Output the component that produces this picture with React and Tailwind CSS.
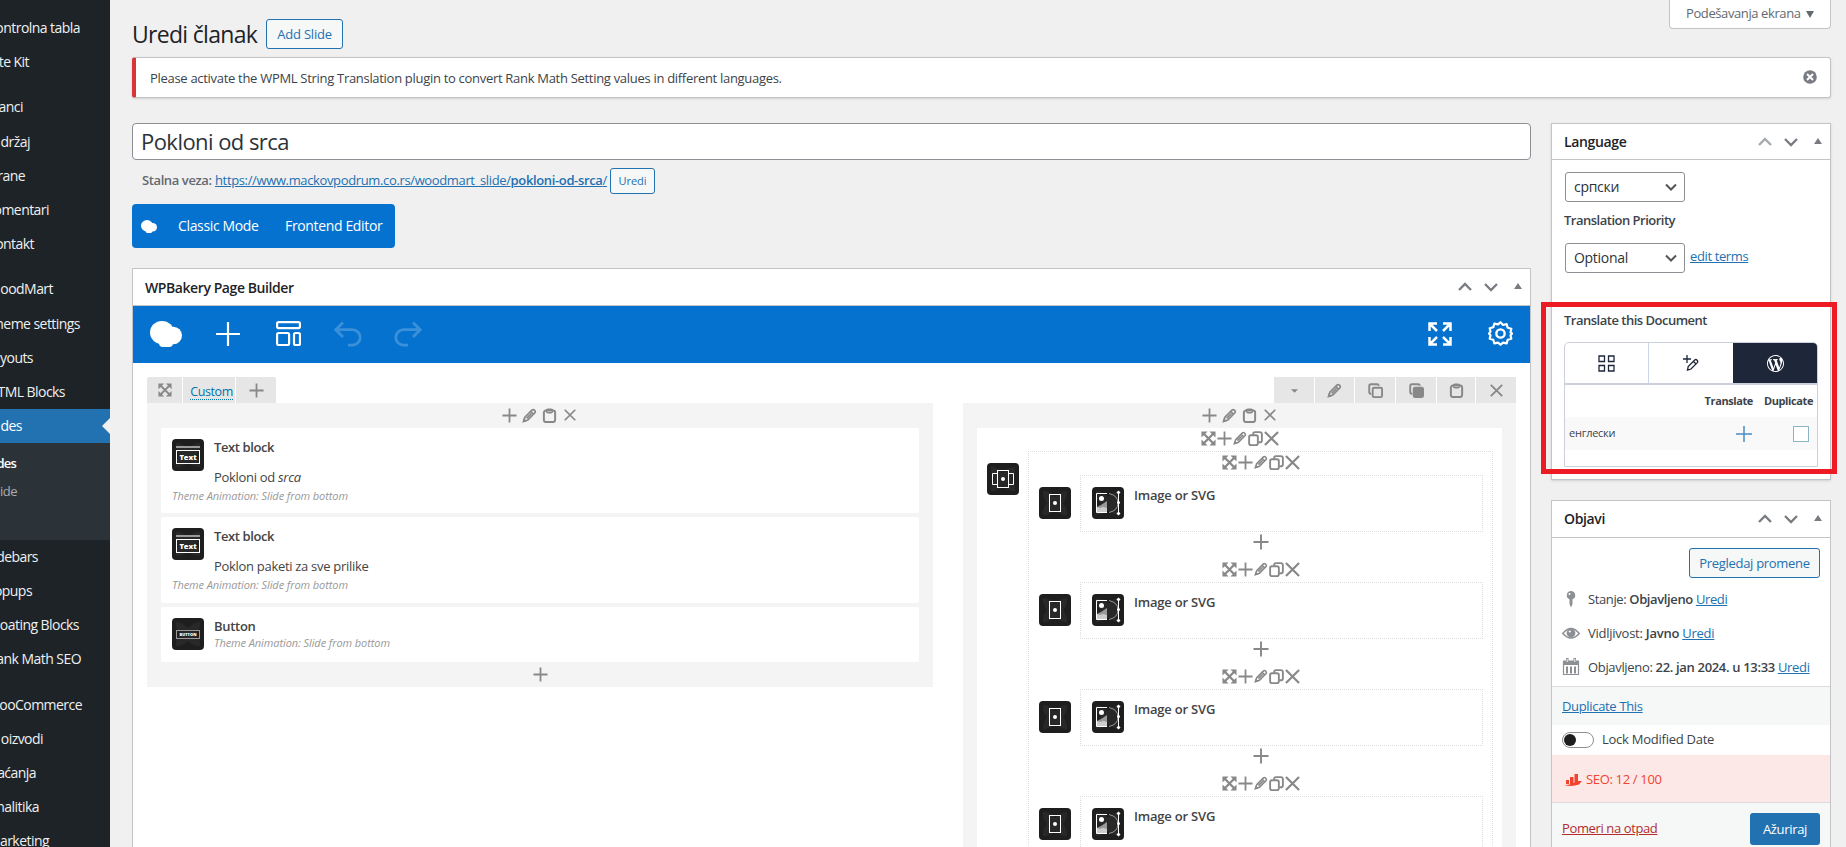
import React from 'react';

const menuItems = [
  { label: 'ontrolna tabla', width: 'w-[80px]', space: 'mt-[11px]' },
  { label: 'te Kit', width: 'w-[29px]' },
  { label: 'anci', width: 'w-[23px]', space: 'mt-[11px]' },
  { label: 'držaj', width: 'w-[30px]', space: 'mt-px' },
  { label: 'rane', width: 'w-[25px]' },
  { label: 'omentari', width: 'w-[49px]' },
  { label: 'ontakt', width: 'w-[34px]' },
  { label: 'oodMart', width: 'w-[53px]', space: 'mt-[11px]' },
  { label: 'heme settings', width: 'w-[80px]', space: 'mt-px' },
  { label: 'ayouts', width: 'w-[33px]' },
  { label: 'TML Blocks', width: 'w-[65px]' },
  { label: 'des', width: 'w-[22px]', active: true },
  { label: 'debars', width: 'w-[38px]' },
  { label: 'opups', width: 'w-[32px]' },
  { label: 'oating Blocks', width: 'w-[79px]' },
  { label: 'ank Math SEO', width: 'w-[81px]' },
  { label: 'ooCommerce', width: 'w-[82px]', space: 'mt-3' },
  { label: 'oizvodi', width: 'w-[43px]' },
  { label: 'aćanja', width: 'w-[36px]' },
  { label: 'nalitika', width: 'w-[39px]' },
  { label: 'arketing', width: 'w-[49px]' },
];

const Svg = ({ className, children, box = 16 }) => (
  <svg viewBox={`0 0 ${box} ${box}`} className={className} fill="none" stroke="currentColor" strokeWidth="1.9">
    {children}
  </svg>
);

const MoveIcon = ({ className = 'size-[15px]' }) => (
  <Svg className={className}>
    <path d="M3 3l10 10M13 3L3 13" strokeWidth="2.4" />
    <path d="M.5.500h6.500L.500 7zM15.500.500v6.500L9 .500zM.500 15.500V9L7 15.500zM15.500 15.500H9l6.500-6.500z" fill="currentColor" stroke="none" />
  </Svg>
);

const PlusIcon = ({ className = 'size-4' }) => (
  <Svg className={className}>
    <path d="M8 .5v15M.5 8h15" />
  </Svg>
);

const PencilIcon = ({ className = 'size-[15px]' }) => (
  <Svg className={className}>
    <path d="M1.800 14.200l1.300-4.400 7.700-7.700q1.300-1 2.600.4t.4 2.600L6.200 12.800z M9.300 3.700l3.100 3.100M5 11l5-5" strokeWidth="1.800" />
    <path d="M.500 15.500l1.200-4.500 3.300 3.300z" fill="currentColor" stroke="none" />
  </Svg>
);

const ClipboardIcon = ({ className = 'size-[15px]' }) => (
  <Svg className={className}>
    <rect x="2" y="2.700" width="12" height="12.300" rx="2.200" strokeWidth="2.100" />
    <rect x="4.800" y="1.300" width="6.400" height="3.700" rx="1.500" strokeWidth="1.600" />
  </Svg>
);

const CopyIcon = ({ className = 'size-[15px]', filled }) => (
  <Svg className={className}>
    <rect x="5" y="5" width="10" height="10" rx="1.500" strokeWidth="2" fill={filled ? 'currentColor' : 'none'} />
    <path d="M3.500 11.500Q1.300 11.500 1.300 9.500V3.300Q1.300 1.300 3.300 1.300H9.500Q11.500 1.300 11.500 3" strokeWidth="2" />
  </Svg>
);

const CloneIcon = ({ className = 'size-[15px]' }) => (
  <Svg className={className}>
    <rect x="1.200" y="4.500" width="9.300" height="10.500" rx="2" strokeWidth="2" />
    <path d="M5.500 4V3Q5.500 1.200 7.500 1.200H12.500Q14.800 1.200 14.800 3.500V10Q14.800 12 12.500 12H11" strokeWidth="2" />
  </Svg>
);

const CloseIcon = ({ className = 'size-[15px]' }) => (
  <Svg className={className}>
    <path d="M1 1l14 14M15 1L1 15" strokeWidth="2.300" />
  </Svg>
);

const BakeryLogo = ({ className }) => (
  <svg viewBox="0 0 32 26" className={className} fill="currentColor">
    <ellipse cx="12" cy="11.500" rx="12" ry="11.500" />
    <circle cx="23.300" cy="14.500" r="8.700" />
    <rect x="9" y="16" width="14" height="10" rx="4" />
  </svg>
);

const Chevron = ({ className = '', down }) => (
  <Svg className={`size-[14px] ${className}`} box={14}>
    <path d={down ? 'M1 4l6 6 6-6' : 'M1 10l6-6 6 6'} strokeWidth="2.300" />
  </Svg>
);

const Arrows = ({ dim }) => (
  <div className="flex items-center text-[#787c82]">
    <Chevron className={dim ? 'text-[#a7aaad]' : ''} />
    <Chevron down className="ml-3" />
    <svg viewBox="0 0 8 6" className="mb-[2px] ml-4 h-[6px] w-[8px]">
      <path d="M4 0l4 6H0z" fill="currentColor" />
    </svg>
  </div>
);

const Tile = ({ children }) => (
  <svg viewBox="0 0 32 32" className="size-8 shrink-0">
    <rect width="32" height="32" rx="4" fill="#1e1e1e" />
    <path d="M4 4q6-1 12 6 6-7 12-6 1 6-4 12 5 6 4 12-6 1-12-5-6 6-12 5-1-6 4-12-5-6-4-12z" fill="#282828" />
    {children}
  </svg>
);

const TextTile = () => (
  <Tile>
    <rect x="4" y="7" width="24" height="2" fill="#999" />
    <rect x="4.500" y="11.500" width="23" height="13" fill="none" stroke="#fff" />
    <text x="16" y="21" textAnchor="middle" fill="#fff" fontSize="7.500" fontWeight="800" fontFamily="Open Sans, sans-serif">Text</text>
  </Tile>
);

const ButtonTile = () => (
  <Tile>
    <rect x="4.500" y="12.500" width="23" height="8" fill="none" stroke="#999" />
    <text x="16" y="18" textAnchor="middle" fill="#fff" fontSize="4" fontWeight="800" fontFamily="Open Sans, sans-serif">BUTTON</text>
  </Tile>
);

const CarouselTile = () => (
  <Tile>
    <path d="M10.500 10.500h-5v11h5M21.500 10.500h5v11h-5" fill="none" stroke="#fff" />
    <rect x="10.500" y="7.500" width="11" height="17" fill="none" stroke="#fff" />
    <circle cx="16" cy="16" r="2" fill="#fff" />
  </Tile>
);

const SlideTile = () => (
  <Tile>
    <rect x="10.500" y="7.500" width="11" height="17" fill="none" stroke="#fff" />
    <circle cx="16" cy="16" r="2" fill="#fff" />
  </Tile>
);

const ImageTile = () => (
  <Tile>
    <path d="M15 6.500H4.500V25.500H15" fill="none" stroke="#fff" />
    <path d="M5 20l4-2 6-4v11H5z" fill="#999" />
    <path d="M5 20l3 1 3-1 4 1v4H5z" fill="#ccc" />
    <circle cx="9.500" cy="11.500" r="2.500" fill="#fff" />
    <path d="M17 6.500q9 2 9 9.500t-9 9.500" fill="none" stroke="#999" />
    <path d="M26.500 5v22" stroke="#fff" />
    <path d="M26.500 3.500l2 2-2 2-2-2zM26.500 24.500l2 2-2 2-2-2z" fill="#fff" />
    <circle cx="26.500" cy="15.500" r="1.500" fill="#fff" />
  </Tile>
);

const NestedControls = ({ className }) => (
  <div className={`flex items-center justify-center gap-px pb-[3px] text-[#888] ${className}`}>
    <MoveIcon />
    <PlusIcon className="size-[15px]" />
    <PencilIcon className="size-[14px]" />
    <CloneIcon />
    <CloseIcon />
  </div>
);

const ColumnControls = () => (
  <div className="flex h-[25px] items-center justify-center gap-[5px] pb-px text-[#888]">
    <PlusIcon className="size-[15px]" />
    <PencilIcon />
    <ClipboardIcon />
    <CloseIcon className="mx-[2px] size-3" />
  </div>
);

const ImageSlide = () => (
  <div className="h-[107px]">
    <NestedControls className="h-[23px]" />
    <div className="flex pl-[10px]">
      <div className="pt-3">
        <SlideTile />
      </div>
      <div className="ml-[9px] flex h-[57px] w-[403px] border border-dotted border-[#ddd] pt-[11px] pl-[11px]">
        <ImageTile />
        <span className="ml-[10px] text-[13px] leading-4 font-semibold tracking-[-0.2px] text-[#444]">Image or SVG</span>
      </div>
    </div>
    <div className="flex justify-center pt-[2px] text-[#888]">
      <PlusIcon />
    </div>
  </div>
);

const Sidebar = () => (
  <nav className="flex h-[847px] w-[110px] shrink-0 flex-col overflow-hidden bg-[#1d2327]">
    {menuItems.map((item) => (
      <React.Fragment key={item.label}>
        <div className={`relative flex h-[34px] shrink-0 items-center ${item.space || ''} ${item.active ? 'bg-[#2271b1] text-white' : 'text-[#f0f0f1]'}`}>
          <div className={`flex justify-end text-sm tracking-[-0.55px] whitespace-nowrap ${item.width}`}>{item.label}</div>
          {item.active && (
            <svg viewBox="0 0 8 16" className="absolute right-0 h-4 w-2">
              <path d="M8 0v16L0 8z" fill="#f0f0f1" />
            </svg>
          )}
        </div>
        {item.active && (
          <div className="h-[97px] shrink-0 bg-[#2c3338] pt-[7px] text-[13px] tracking-[-0.8px]">
            <div className="flex h-7 w-4 items-center justify-end font-semibold text-white">des</div>
            <div className="flex h-7 w-[17px] items-center justify-end tracking-[-0.5px] text-[#a9adb1]">ide</div>
          </div>
        )}
      </React.Fragment>
    ))}
  </nav>
);

const PageHeading = () => (
  <div className="flex h-[57px]">
    <h1 className="mt-[17px] w-[134px] text-[23px] leading-[34px] tracking-[-0.7px] whitespace-nowrap text-[#1d2327]">Uredi članak</h1>
    <button className="mt-[19px] h-[30px] w-[77px] rounded-[3px] border border-[#2271b1] bg-[#f6f7f7] pt-px text-[13px] tracking-[-0.2px] text-[#2271b1]">Add Slide</button>
    <div className="ml-auto flex h-[29px] w-[162px] items-center rounded-b border border-t-0 border-[#c3c4c7] bg-white pl-4 text-[13px] tracking-[-0.4px] text-[#646970]">
      <span className="w-[113px] pb-px whitespace-nowrap">Podešavanja ekrana</span>
      <svg viewBox="0 0 8 7" className="ml-[7px] h-[7px] w-[8px]">
        <path d="M0 0h8L4 7z" fill="#646970" />
      </svg>
    </div>
  </div>
);

const Notice = () => (
  <div className="flex h-[41px] items-center rounded-[3px] border border-l-4 border-[#c3c4c7] border-l-[#d63638] bg-white pr-[13px] pl-[14px] shadow-sm">
    <p className="pt-[2px] text-[13px] tracking-[-0.3px]">Please activate the WPML String Translation plugin to convert Rank Math Setting values in different languages.</p>
    <svg viewBox="0 0 14 14" className="mb-[2px] ml-auto size-[14px]">
      <circle cx="7" cy="7" r="6.800" fill="#787c82" />
      <path d="M4 4l6 6M10 4l-6 6" stroke="#fff" strokeWidth="2" />
    </svg>
  </div>
);

const rowTools = [
  { width: 'w-10', icon: <svg viewBox="0 0 8 4" className="mt-px h-1 w-[7px]"><path d="M0 0h8L4 4z" fill="currentColor" /></svg> },
  { width: 'w-[39px]', icon: <PencilIcon /> },
  { width: 'w-10', icon: <CopyIcon /> },
  { width: 'w-10', icon: <CopyIcon filled /> },
  { width: 'w-[38px]', icon: <ClipboardIcon /> },
  { width: 'w-10', icon: <CloseIcon className="size-[13px]" /> },
];

const BakeryToolbar = () => (
  <div className="flex h-[57px] items-center bg-[#0572cf] pr-[17px] pb-[2px] pl-[17px] text-white">
    <BakeryLogo className="h-[26px] w-8" />
    <Svg className="ml-[34px] size-6" box={24}>
      <path d="M12 0v24M0 12h24" strokeWidth="2.200" />
    </Svg>
    <Svg className="ml-9 size-[25px]" box={25}>
      <rect x="1.100" y="1.100" width="22.800" height="6" rx="1.500" strokeWidth="2.200" />
      <rect x="1.100" y="12" width="12" height="12" rx="1.500" strokeWidth="2.200" />
      <rect x="18" y="12" width="6" height="12" rx="1.500" strokeWidth="2.200" />
    </Svg>
    <Svg className="ml-[33px] size-7 text-[#3b91d9]" box={28}>
      <path d="M9 2.500L1.800 9.700 9 16.900M2 9.700H18.500a7.700 7.700 0 0 1 0 15.400H14" strokeWidth="2.800" />
    </Svg>
    <Svg className="ml-8 size-7 text-[#3b91d9]" box={28}>
      <path d="M19 2.500l7.200 7.200-7.200 7.200M26 9.700H9.500a7.700 7.700 0 0 0 0 15.400H14" strokeWidth="2.800" />
    </Svg>
    <Svg className="ml-auto size-6" box={24}>
      <path d="M1.500 9V1.500H9M2 2l7 7M15 1.500h7.500V9M22 2l-7 7M1.500 15v7.500H9M2 22l7-7M15 22.500h7.500V15M22 22l-7-7" strokeWidth="2.500" />
    </Svg>
    <Svg className="ml-9 size-[25px]" box={24}>
      <path d="M12 1.200l2.400 2.600 3.500-.8 1 3.500 3.500 1-.8 3.500L23 12l-1.400 1.800.8 3.200-3.500 1-1 3.500-3.500-.8L12 22.800l-2.400-2.100-3.500.8-1-3.500-3.500-1 .8-3.200L1 12l1.400-1.800-.8-3.200 3.500-1 1-3.500 3.500.8z" strokeWidth="2.100" strokeLinejoin="round" />
      <circle cx="12" cy="12" r="4" strokeWidth="2.300" />
    </Svg>
  </div>
);

const animation = 'Theme Animation: Slide from bottom';

const TextBlock = ({ className, children }) => (
  <div className={`rounded-[2px] bg-white pt-[11px] pl-[11px] text-[#444] ${className}`}>
    <div className="flex">
      <TextTile />
      <div className="ml-[10px] text-[13px]">
        <div className="leading-4 font-semibold tracking-[-0.4px]">Text block</div>
        <div className="mt-[14px] leading-4 tracking-[-0.3px]">{children}</div>
      </div>
    </div>
    <div className="mt-[3px] text-[11px] leading-[15px] tracking-[-0.08px] text-[#999] italic">{animation}</div>
  </div>
);

const PageBuilder = () => (
  <section className="mt-5 h-[579px] border border-b-0 border-[#c3c4c7] bg-white">
    <div className="flex h-[37px] items-center justify-between border-b border-[#c3c4c7] pr-2 pl-3">
      <h2 className="pt-px text-sm font-semibold tracking-[-0.42px] text-[#1d2327]">WPBakery Page Builder</h2>
      <Arrows />
    </div>
    <BakeryToolbar />
    <div className="px-[14px] pt-[14px]">
      <div className="flex h-[26px] justify-between text-[#888]">
        <div className="flex gap-px">
          <div className="flex w-[35px] items-center justify-center rounded-tl-[2px] bg-[#e6e6e6]">
            <MoveIcon className="size-[14px]" />
          </div>
          <div className="flex w-[52px] items-center justify-center bg-[#e6e6e6] pt-1 pl-[5px]">
            <span className="border-b border-dotted border-[#0073aa] text-[12.5px] leading-[14px] tracking-[-0.4px] text-[#0073aa]">Custom</span>
          </div>
          <div className="flex w-10 items-center justify-center rounded-tr-[2px] bg-[#e6e6e6]">
            <PlusIcon className="size-[15px]" />
          </div>
        </div>
        <div className="flex gap-px">
          {rowTools.map((tool, i) => (
            <div key={i} className={`flex items-center justify-center bg-[#e6e6e6] ${tool.width}`}>
              {tool.icon}
            </div>
          ))}
        </div>
      </div>
      <div className="flex justify-between">
        <div className="flex h-[284px] w-[786px] flex-col bg-[#f4f4f4] px-[14px]">
          <ColumnControls />
          <TextBlock className="h-[85px]">
            Pokloni od <em>srca</em>
          </TextBlock>
          <TextBlock className="mt-1 h-[86px]">Poklon paketi za sve prilike</TextBlock>
          <div className="mt-1 flex h-[55px] rounded-[2px] bg-white pt-[11px] pl-[11px]">
            <ButtonTile />
            <div className="ml-[10px] text-[#444]">
              <div className="text-[13px] leading-4 font-semibold tracking-[-0.3px]">Button</div>
              <div className="text-[11px] leading-[17px] tracking-[-0.08px] text-[#999] italic">{animation}</div>
            </div>
          </div>
          <div className="flex h-[25px] items-center justify-center text-[#888]">
            <PlusIcon className="size-[15px]" />
          </div>
        </div>
        <div className="h-[444px] w-[553px] overflow-hidden bg-[#f4f4f4] px-[14px]">
          <ColumnControls />
          <div className="h-[500px] bg-white pl-[10px]">
            <NestedControls className="h-[23px] pr-[10px]" />
            <div className="flex">
              <div className="pt-3">
                <CarouselTile />
              </div>
              <div className="ml-[9px] h-[477px] w-[465px] border border-dotted border-[#ddd]">
                <ImageSlide />
                <ImageSlide />
                <ImageSlide />
                <ImageSlide />
              </div>
            </div>
          </div>
        </div>
      </div>
    </div>
  </section>
);

const Editor = () => (
  <div className="w-[1399px]">
    <div className="flex h-[37px] items-center rounded-[4px] border border-[#8c8f94] bg-white pb-px pl-2 text-[22px] tracking-[-0.55px] text-[#2c3338]">Pokloni od srca</div>
    <div className="mt-2 flex h-[26px] items-center pl-[10px] text-[13px] whitespace-nowrap">
      <strong className="w-[73px] font-semibold tracking-[-0.4px] text-[#646970]">Stalna veza:</strong>
      <a className="w-[395px] tracking-[-0.36px] text-[#2271b1] underline">
        https://www.mackovpodrum.co.rs/woodmart_slide/<b className="font-semibold">pokloni-od-srca</b>/
      </a>
      <button className="h-[26px] w-[45px] rounded-[3px] border border-[#2271b1] bg-[#f6f7f7] text-[11px] text-[#2271b1]">Uredi</button>
    </div>
    <div className="mt-[10px] flex h-11 w-[263px] items-center rounded-[4px] bg-[#0572cf] pl-[9px] text-sm tracking-[-0.35px] whitespace-nowrap text-white">
      <BakeryLogo className="h-[13px] w-4" />
      <span className="ml-[21px] w-[107px]">Classic Mode</span>
      <span>Frontend Editor</span>
    </div>
    <PageBuilder />
  </div>
);

const Select = ({ children }) => (
  <div className="flex h-[30px] w-[120px] items-center justify-between rounded-[3px] border border-[#8c8f94] bg-white pr-[7px] pl-2 text-sm tracking-[-0.3px] text-[#2c3338]">
    {children}
    <Svg className="size-3 text-[#555]" box={12}>
      <path d="M1 3.500l5 5 5-5" strokeWidth="2" />
    </Svg>
  </div>
);

const LanguageBox = () => (
  <section className="relative h-[357px] border border-[#c3c4c7] bg-white shadow-sm">
    <div className="flex h-[36px] items-center justify-between border-b border-[#c3c4c7] pr-2 pl-3">
      <h2 className="pt-px text-sm font-semibold tracking-[-0.35px] text-[#1d2327]">Language</h2>
      <Arrows dim />
    </div>
    <div className="px-3 pt-3 text-[13px]">
      <div className="pl-px">
        <Select>српски</Select>
      </div>
      <div className="mt-[9px] leading-[18px] font-semibold tracking-[-0.5px]">Translation Priority</div>
      <div className="mt-[14px] flex pl-px">
        <Select>Optional</Select>
        <a className="mt-1 ml-[5px] leading-[18px] tracking-[-0.38px] text-[#2271b1] underline">edit terms</a>
      </div>
      <div className="mt-[38px] leading-[18px] font-semibold tracking-[-0.5px]">Translate this Document</div>
      <div className="mt-[13px] h-[125px] w-[254px] rounded-t-[5px] border border-[#ccd0dc]">
        <div className="flex h-[42px] border-b-2 border-[#ccd0dc] text-[#1d2739]">
          <div className="flex w-[84px] items-center justify-center border-r border-[#ccd6e6]">
            <Svg className="size-[17px]" box={17}>
              <path d="M1 1h5.500v5.500H1zM10.500 1H16v5.500h-5.500zM1 10.500h5.500V16H1zM10.500 10.500H16V16h-5.500z" strokeWidth="1.300" />
            </Svg>
          </div>
          <div className="flex w-[84px] items-center justify-center">
            <Svg className="size-4">
              <path d="M4 0v8M0 4h8M4.500 15l.7-3.500 6.500-6.500q1.200-1 2.400.2t.2 2.400L8 14zM10.500 6.500l2.300 2.300" strokeWidth="1.300" />
            </Svg>
          </div>
          <div className="flex flex-1 items-center justify-center rounded-tr-[4px] bg-[#1d2739] text-white">
            <svg viewBox="0 0 20 20" className="size-[17px]" fill="currentColor">
              <path d="M20 10c0-5.510-4.490-10-10-10C4.480 0 0 4.490 0 10c0 5.520 4.480 10 10 10 5.510 0 10-4.480 10-10zM7.780 15.370L4.370 6.220c.55-.02 1.170-.08 1.170-.08.5-.06.44-1.130-.06-1.110 0 0-1.450.110-2.370.110-.18 0-.37 0-.58-.010C4.120 2.690 6.870 1.110 10 1.110c2.330 0 4.450.87 6.050 2.340-.68-.110-1.650.39-1.650 1.580 0 .74.45 1.360.9 2.100.35.610.55 1.360.55 2.460 0 1.490-1.400 5-1.400 5l-3.030-8.370c.54-.02.82-.17.82-.17.5-.05.44-1.250-.06-1.220 0 0-1.440.12-2.380.12-.87 0-2.330-.12-2.330-.12-.5-.03-.56 1.200-.06 1.220l.92.08 1.260 3.410zM17.410 10c.24-.64.74-1.870.43-4.250.7 1.290 1.050 2.710 1.050 4.250 0 3.290-1.730 6.240-4.400 7.780.97-2.590 1.940-5.200 2.920-7.780zM6.100 18.090C3.120 16.650 1.110 13.530 1.110 10c0-1.300.23-2.480.72-3.590C3.250 10.300 4.670 14.200 6.100 18.090zM10.130 11.460l2.580 6.980c-.86.290-1.760.45-2.710.45-.79 0-1.570-.110-2.290-.33.810-2.380 1.620-4.740 2.420-7.100z" />
            </svg>
          </div>
        </div>
        <div className="flex h-[32px] items-center justify-end gap-[11px] pt-px pr-1 text-[11px] font-bold tracking-[-0.4px]">
          <span>Translate</span>
          <span>Duplicate</span>
        </div>
        <div className="flex h-[33px] items-center bg-[#f9f9f9] pr-2 pl-1 text-[11px] tracking-[-0.25px]">
          <span>енглески</span>
          <Svg className="mr-[2px] ml-auto size-4 text-[#4a8cc4]">
            <path d="M8 0v16M0 8h16" strokeWidth="1.500" />
          </Svg>
          <span className="ml-[39px] size-4 border border-[#8bb4c4] bg-white" />
        </div>
      </div>
    </div>
    {/* highlighted region */}
    <div className="absolute top-[178px] -left-[11px] h-[172px] w-[296px] border-[5px] border-[#ed1c24]" />
  </section>
);

const PublishBox = () => (
  <section className="mt-5 h-[347px] border border-b-0 border-[#c3c4c7] bg-white text-[13px] tracking-[-0.33px]">
    <div className="flex h-[37px] items-center justify-between border-b border-[#c3c4c7] pr-2 pl-3">
      <h2 className="text-sm font-semibold tracking-[-0.35px] text-[#1d2327]">Objavi</h2>
      <Arrows />
    </div>
    <div className="flex justify-end pt-[10px] pr-[10px]">
      <button className="h-[30px] w-[131px] rounded-[3px] border border-[#2271b1] bg-[#f6f7f7] pt-px tracking-[-0.3px] text-[#2271b1]">Pregledaj promene</button>
    </div>
    <div className="mt-1 flex h-[34px] items-center pl-[10px] whitespace-nowrap">
      <svg viewBox="0 0 18 18" className="size-[18px] text-[#8c8f94]" fill="currentColor">
        <path d="M9 1a4.300 4.300 0 0 1 1.500 8.300V14L9 17.500 7.500 14V9.300A4.300 4.300 0 0 1 9 1z" />
        <circle cx="7.500" cy="4" r="1" fill="#fff" />
      </svg>
      <span className="ml-2 pt-px tracking-[-0.38px]">Stanje: <b className="font-semibold">Objavljeno</b> <a className="text-[#2271b1] underline">Uredi</a></span>
    </div>
    <div className="flex h-[34px] items-center pl-[10px] whitespace-nowrap">
      <svg viewBox="0 0 18 18" className="size-[18px] text-[#8c8f94]" fill="none" stroke="currentColor" strokeWidth="1.400">
        <path d="M.7 9.500Q9-.5 17.300 9.500 9 18.500.7 9.500z" />
        <circle cx="9" cy="9" r="3.700" fill="currentColor" />
        <circle cx="7.800" cy="7.500" r="1.100" fill="#fff" stroke="none" />
      </svg>
      <span className="ml-2 pt-px tracking-[-0.25px]">Vidljivost: <b className="font-semibold">Javno</b> <a className="text-[#2271b1] underline">Uredi</a></span>
    </div>
    <div className="flex h-[34px] items-center pl-[10px] whitespace-nowrap">
      <svg viewBox="0 0 18 18" className="size-[18px] text-[#8c8f94]" fill="none" stroke="currentColor" strokeWidth="1.200">
        <path d="M1.500 3v13.500h15V3" />
        <path d="M1 2.500h16V7H1zM4 0h2.500v3H4zM11.500 0H14v3h-2.500z" fill="currentColor" stroke="none" />
        <path d="M5.200 1v3M12.800 1v3" stroke="#fff" strokeWidth=".9" />
        <path d="M5 8.500v7M9 8.500v7M13 8.500v7" strokeWidth="2" />
      </svg>
      <span className="ml-2 pt-px">Objavljeno: <b className="font-semibold">22. jan 2024. u 13:33</b> <a className="text-[#2271b1] underline">Uredi</a></span>
    </div>
    <div className="mt-[2px] flex h-[39px] items-center border-t border-[#dcdcde] bg-[#f6f7f7] pt-[2px] pl-[10px]">
      <a className="text-[#2271b1] underline">Duplicate This</a>
    </div>
    <div className="flex h-[30px] items-center pb-px pl-[10px]">
      <span className="flex h-4 w-8 items-center rounded-full border border-[#8c8f94] pl-px">
        <span className="size-3 rounded-full bg-[#1e1e1e]" />
      </span>
      <span className="ml-2 pt-px tracking-[-0.25px]">Lock Modified Date</span>
    </div>
    <div className="flex h-[47px] items-center bg-[#fde8e8] pt-[2px] pl-3 font-medium text-[#f0442e]">
      <svg viewBox="0 0 18 12" className="h-3 w-[18px]" fill="currentColor">
        <path d="M2 6h3v4H2zM6 3h3.500v7H6zM10.500 0H14v9h-3.500z" />
        <path d="M0 11q5 .5 9-2 3-1 5-.5V7l4 0-3 3.500q-7 2.500-15 .5z" />
      </svg>
      <span className="ml-1">SEO: 12 / 100</span>
    </div>
    <div className="flex h-[45px] items-start border-t border-[#dcdcde] bg-[#f6f7f7] pt-[10px] pr-[10px] pl-[10px]">
      <a className="mt-[6px] leading-[18px] tracking-[-0.38px] text-[#b32d2e] underline">Pomeri na otpad</a>
      <button className="ml-auto h-8 w-[70px] rounded-[3px] bg-[#2271b1] pt-px text-white">Ažuriraj</button>
    </div>
  </section>
);

const App = () => {
  return (
    <div className="flex h-[847px] w-[1846px] overflow-hidden bg-[#f0f0f1] font-['Open_Sans','Noto_Sans',sans-serif] text-[#3c434a]">
      <Sidebar />
      <main className="ml-[22px] w-[1699px] shrink-0">
        <PageHeading />
        <Notice />
        <div className="mt-[25px] flex justify-between">
          <Editor />
          <aside className="w-[280px]">
            <LanguageBox />
            <PublishBox />
          </aside>
        </div>
      </main>
    </div>
  );
};

export default App;
